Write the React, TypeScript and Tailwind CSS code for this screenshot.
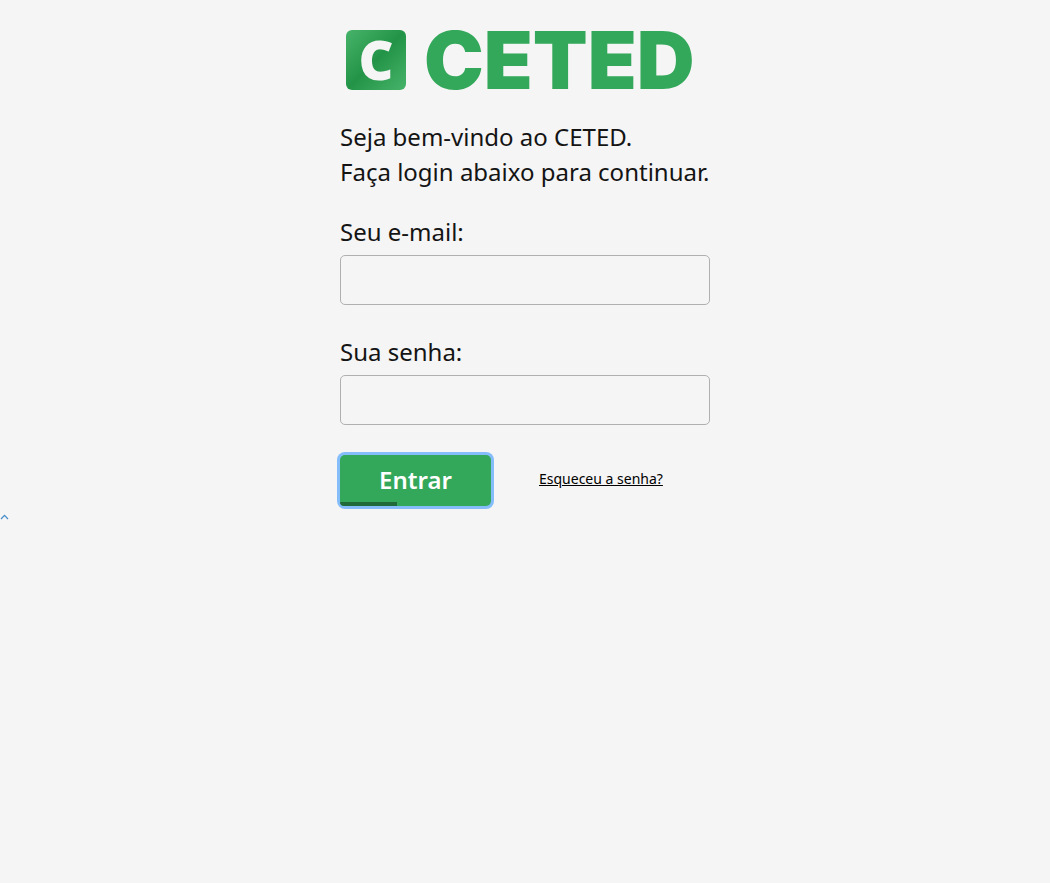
import React from 'react';

function Logo() {
  return (
    <div className="flex h-15 items-center gap-[18px] pl-1.5" role="img" aria-label="CETED">
      <span className="flex size-15 shrink-0 justify-center rounded-md bg-linear-to-br from-[#46b36a] via-[#229447] to-[#46b36a] font-['Noto_Sans',sans-serif] text-[54px] leading-[58px] font-black text-[#f5f5f5]">
        C
      </span>
      <span className="font-['Inter',sans-serif] text-[80px] leading-15 font-black text-[#34a85a]">
        CETED
      </span>
    </div>
  );
}

type FieldProps = { id: string; label: string; type: string };

function Field({ id, label, type }: FieldProps) {
  return (
    <div className="flex flex-col gap-[7px]">
      <label htmlFor={id} className="leading-[33px]">
        {label}
      </label>
      <input
        id={id}
        name={id}
        type={type}
        className="h-[50px] w-full rounded-[5px] border border-[#b0b0b0] bg-transparent px-3 outline-none"
      />
    </div>
  );
}

export default function App() {
  return (
    <div className="min-h-screen bg-[#f5f5f5] font-['Noto_Sans',sans-serif] text-2xl text-[#141414]">
      <main className="mx-auto w-full max-w-[370px] pt-[30px]">
        <Logo />
        <p className="mt-[29px] leading-[35px] whitespace-nowrap">
          Seja bem-vindo ao CETED.
          <br />
          Faça login abaixo para continuar.
        </p>
        <form className="mt-[26px] flex flex-col gap-[30px]" onSubmit={(e) => e.preventDefault()}>
          <Field id="email" label="Seu e-mail:" type="email" />
          <Field id="senha" label="Sua senha:" type="password" />
          <div className="flex items-center gap-12">
            <button
              type="submit"
              className="relative h-[51px] w-[151px] rounded-[5px] bg-[#34a85a] pb-0.5 font-semibold text-white ring-3 ring-[#85bdfb] outline-none"
            >
              Entrar
              <span className="absolute bottom-0 left-0 h-1 w-[57px] rounded-bl-[5px] bg-[#206938]" />
            </button>
            <a href="#senha" className="pb-1 text-sm text-black underline">
              Esqueceu a senha?
            </a>
          </div>
        </form>
      </main>
      <a href="#top" aria-label="Voltar ao topo" className="mt-2 block w-[9px] text-[#428bca]">
        <svg viewBox="0 0 9 6" className="block h-1.5 w-[9px]" fill="none" stroke="currentColor" strokeWidth="1.2">
          <path d="M1 5 4.5 1.4 8 5" />
        </svg>
      </a>
    </div>
  );
}
